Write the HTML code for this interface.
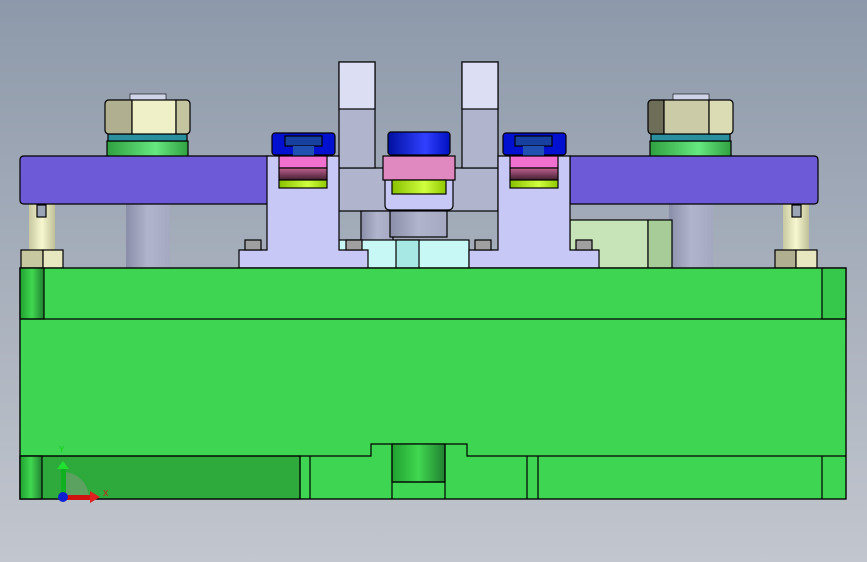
<!DOCTYPE html>
<html><head><style>html,body{margin:0;padding:0;width:867px;height:562px;overflow:hidden}</style></head>
<body>
<svg width="867" height="562" viewBox="0 0 867 562" xmlns="http://www.w3.org/2000/svg">
<defs>
<linearGradient id="bg" x1="0" y1="0" x2="0" y2="1"><stop offset="0" stop-color="#8d99aa"/><stop offset="1" stop-color="#c2c6ce"/></linearGradient>
<linearGradient id="rod" x1="0" x2="1"><stop offset="0" stop-color="#8a8ea8"/><stop offset=".5" stop-color="#b0b4cc"/><stop offset="1" stop-color="#a4a8c0"/></linearGradient>
<linearGradient id="gs" x1="0" x2="1"><stop offset="0" stop-color="#30a040"/><stop offset=".6" stop-color="#66e880"/><stop offset="1" stop-color="#30a040"/></linearGradient>
<linearGradient id="post" x1="0" x2="1"><stop offset="0" stop-color="#c8c8a0"/><stop offset=".5" stop-color="#f8f8d0"/><stop offset="1" stop-color="#c0c098"/></linearGradient>
<linearGradient id="blue" x1="0" x2="1"><stop offset="0" stop-color="#0010a0"/><stop offset=".6" stop-color="#3040ff"/><stop offset="1" stop-color="#0010c0"/></linearGradient>
<linearGradient id="lime" x1="0" x2="1"><stop offset="0" stop-color="#88c000"/><stop offset=".6" stop-color="#d0ff40"/><stop offset="1" stop-color="#90c800"/></linearGradient>
<linearGradient id="dp" x1="0" y1="0" x2="0" y2="1"><stop offset="0" stop-color="#c06090"/><stop offset="1" stop-color="#402030"/></linearGradient>
<linearGradient id="gd" x1="0" x2="1"><stop offset="0" stop-color="#20a030"/><stop offset=".5" stop-color="#40d850"/><stop offset="1" stop-color="#208030"/></linearGradient>
</defs>
<rect width="867" height="562" fill="url(#bg)"/>
<g stroke="#000" stroke-width="1.2">
<rect x="126" y="200" width="44" height="68" fill="url(#rod)" stroke="none"/>
<rect x="669" y="200" width="44" height="68" fill="url(#rod)" stroke="none"/>
<rect x="29" y="200" width="26" height="52" fill="url(#post)" stroke="none"/>
<rect x="37" y="205" width="9" height="12" fill="#9aa4b4"/>
<rect x="783" y="200" width="26" height="52" fill="url(#post)" stroke="none"/>
<rect x="792" y="205" width="9" height="12" fill="#9aa4b4"/>
<rect x="21" y="250" width="22" height="18" fill="#c8c8a0"/><rect x="43" y="250" width="20" height="18" fill="#e8e8c0"/>
<rect x="775" y="250" width="21" height="18" fill="#b0b090"/><rect x="796" y="250" width="21" height="18" fill="#e8e8c0"/>
<rect x="107" y="141" width="81" height="16" fill="url(#gs)"/>
<rect x="108" y="134" width="79" height="7" fill="#2a90a0"/>
<rect x="650" y="141" width="81" height="16" fill="url(#gs)"/>
<rect x="651" y="134" width="79" height="7" fill="#2a90a0"/>
<rect x="130" y="94" width="36" height="6" fill="#d0d4e8" stroke-width=".6"/>
<rect x="673" y="94" width="36" height="6" fill="#d0d4e8" stroke-width=".6"/>
<path d="M108 100h24v34h-24q-3-1-3-4v-26q0-3 3-4z" fill="#b0b090"/>
<rect x="132" y="100" width="44" height="34" fill="#f0f0c8"/>
<path d="M176 100h11q3 1 3 4v26q0 3-3 4h-11z" fill="#c4c4a0"/>
<path d="M651 100h13v34h-13q-3-1-3-4v-26q0-3 3-4z" fill="#6e6e58"/>
<rect x="664" y="100" width="45" height="34" fill="#cbcba8"/>
<path d="M709 100h21q3 1 3 4v26q0 3-3 4h-21z" fill="#dcdcb4"/>
<path d="M24 156h244v48h-244q-4 0-4-4v-40q0-4 4-4z" fill="#6c5ad6"/>
<path d="M570 156h244q4 0 4 4v40q0 4-4 4h-244z" fill="#6c5ad6"/>
<rect x="570" y="220" width="78" height="48" fill="#c6e4b8"/>
<rect x="648" y="220" width="24" height="48" fill="#a8cc98"/>
<rect x="339" y="168" width="159" height="43" fill="#b0b4cc"/>
<rect x="339" y="62" width="36" height="106" fill="#b0b4cc"/>
<rect x="339" y="62" width="36" height="47" fill="#dcdff4"/>
<rect x="462" y="62" width="36" height="106" fill="#b0b4cc"/>
<rect x="462" y="62" width="36" height="47" fill="#dcdff4"/>
<rect x="361" y="211" width="32" height="30" fill="url(#rod)"/>
<rect x="390" y="211" width="57" height="26" fill="url(#rod)"/>
<rect x="339" y="240" width="130" height="28" fill="#c8f8f6"/>
<rect x="396" y="240" width="23" height="28" fill="#a8e8e4"/>
<path d="M267 156h72v94h29v18h-129v-18h28z" fill="#c8c8f6"/>
<path d="M498 156h72v94h29v18h-130v-18h29z" fill="#c8c8f6"/>
<rect x="245" y="240" width="16" height="10" fill="#a0a0a0"/>
<rect x="346" y="240" width="16" height="10" fill="#a0a0a0"/>
<rect x="475" y="240" width="16" height="10" fill="#a0a0a0"/>
<rect x="576" y="240" width="16" height="10" fill="#a0a0a0"/>
<path d="M385 180h68v25q0 5-5 5h-58q-5 0-5-5z" fill="#c8c8f6"/>
<rect x="383" y="156" width="72" height="24" fill="#e088c0"/>
<rect x="392" y="180" width="54" height="14" fill="url(#lime)"/>
<rect x="388" y="132" width="62" height="23" rx="3" fill="url(#blue)"/>
<rect x="272" y="133" width="63" height="22" rx="3" fill="#0010d0"/>
<rect x="285" y="136" width="37" height="10" fill="#1840a0"/>
<rect x="293" y="146" width="21" height="10" fill="#2050b0" stroke="none"/>
<rect x="279" y="156" width="48" height="12" fill="#f070d0"/>
<rect x="279" y="168" width="48" height="12" fill="url(#dp)"/>
<rect x="279" y="180" width="48" height="8" fill="url(#lime)"/>
<rect x="503" y="133" width="63" height="22" rx="3" fill="#0010d0"/>
<rect x="515" y="136" width="37" height="10" fill="#1840a0"/>
<rect x="523" y="146" width="21" height="10" fill="#2050b0" stroke="none"/>
<rect x="510" y="156" width="48" height="12" fill="#f070d0"/>
<rect x="510" y="168" width="48" height="12" fill="url(#dp)"/>
<rect x="510" y="180" width="48" height="8" fill="url(#lime)"/>
<rect x="20" y="268" width="826" height="231" fill="#3ed552"/>
<rect x="20" y="268" width="24" height="51" fill="url(#gd)"/>
<rect x="822" y="268" width="24" height="51" fill="#36c84a"/>
<line x1="20" y1="319" x2="846" y2="319"/>
<rect x="20" y="456" width="280" height="43" fill="#2eaa3c"/>
<rect x="20" y="456" width="22" height="43" fill="url(#gd)"/>
<path d="M20 456h351v-12h96v12h379" fill="none"/>
<rect x="392" y="444" width="53" height="38" fill="url(#gd)"/>
<path d="M392 482h53M392 444v55M445 444v55M300 456v43M310 456v43M527 456v43M538 456v43M822 456v43" fill="none"/>
<rect x="20" y="268" width="826" height="231" fill="none"/>
</g>
<path d="M63 498 V472 A26 26 0 0 1 89 498 Z" fill="#7a9c7a" opacity=".6"/>
<rect x="61" y="467" width="5" height="31" fill="#10b020"/>
<path d="M57 469l6-8 6 8z" fill="#20e030"/>
<rect x="63" y="495" width="28" height="5" fill="#d01010"/>
<path d="M90 491l10 6-10 6z" fill="#e02020"/>
<circle cx="63" cy="497" r="5" fill="#1020d0"/>
<text x="59" y="452" font-family="Liberation Sans,sans-serif" font-size="8" fill="#10d010">Y</text>
<text x="103" y="496" font-family="Liberation Sans,sans-serif" font-size="8" fill="#e01010">X</text>
</svg>
</body></html>
